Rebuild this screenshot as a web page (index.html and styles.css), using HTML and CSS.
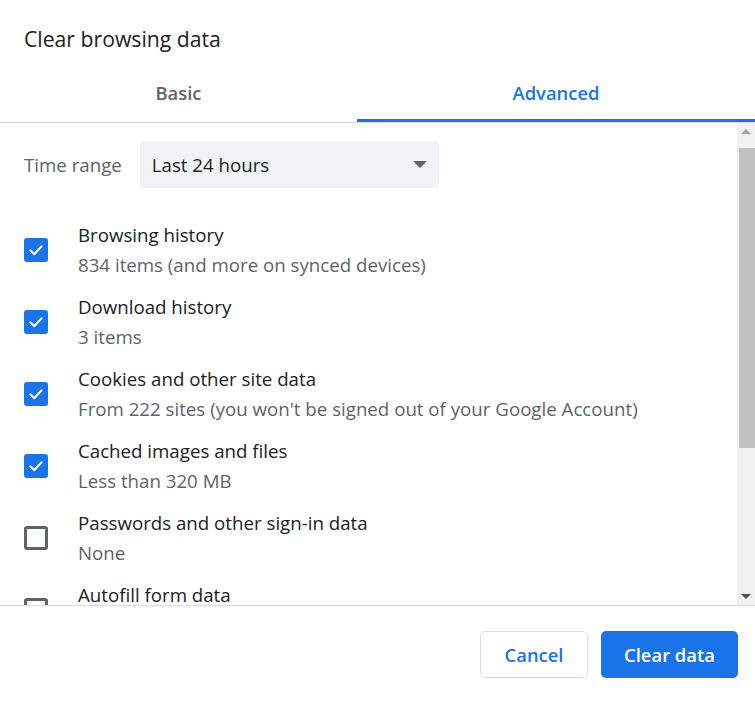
FILE: index.html
```html
<!DOCTYPE html>
<html>
<head>
<meta charset="utf-8">
<link rel="stylesheet" href="styles.css">
</head>
<body>
<div class="dialog">
  <div class="title">Clear browsing data</div>
  <div class="tabs">
    <div class="tab">Basic</div>
    <div class="tab active">Advanced</div>
  </div>
  <div class="scroll">
    <div class="content">
      <div class="range-row">
        <span class="range-label">Time range</span>
        <div class="select">
          <span>Last 24 hours</span>
          <svg class="caret" width="14" height="7" viewBox="0 0 14 7"><path d="M0 0h14L7 7z" fill="#5f6368"/></svg>
        </div>
      </div>
      <div class="item">
        <span class="cb checked"><svg viewBox="0 0 24 24" width="24" height="24"><path d="M6.5 12.5l3.8 3.6 7.2-7.6" fill="none" stroke="#fff" stroke-width="2.2" stroke-linecap="round" stroke-linejoin="round"/></svg></span>
        <div class="texts"><div class="t">Browsing history</div><div class="s">834 items (and more on synced devices)</div></div>
      </div>
      <div class="item">
        <span class="cb checked"><svg viewBox="0 0 24 24" width="24" height="24"><path d="M6.5 12.5l3.8 3.6 7.2-7.6" fill="none" stroke="#fff" stroke-width="2.2" stroke-linecap="round" stroke-linejoin="round"/></svg></span>
        <div class="texts"><div class="t">Download history</div><div class="s">3 items</div></div>
      </div>
      <div class="item">
        <span class="cb checked"><svg viewBox="0 0 24 24" width="24" height="24"><path d="M6.5 12.5l3.8 3.6 7.2-7.6" fill="none" stroke="#fff" stroke-width="2.2" stroke-linecap="round" stroke-linejoin="round"/></svg></span>
        <div class="texts"><div class="t">Cookies and other site data</div><div class="s">From 222 sites (you won't be signed out of your Google Account)</div></div>
      </div>
      <div class="item">
        <span class="cb checked"><svg viewBox="0 0 24 24" width="24" height="24"><path d="M6.5 12.5l3.8 3.6 7.2-7.6" fill="none" stroke="#fff" stroke-width="2.2" stroke-linecap="round" stroke-linejoin="round"/></svg></span>
        <div class="texts"><div class="t">Cached images and files</div><div class="s">Less than 320 MB</div></div>
      </div>
      <div class="item">
        <span class="cb"></span>
        <div class="texts"><div class="t">Passwords and other sign-in data</div><div class="s">None</div></div>
      </div>
      <div class="item">
        <span class="cb"></span>
        <div class="texts"><div class="t last">Autofill form data</div><div class="spacer"></div></div>
      </div>
    </div>
    <div class="scrollbar">
      <div class="arrow up"><svg width="10" height="5" viewBox="0 0 10 5"><path d="M0 5h10L5 0z" fill="#a3a3a3"/></svg></div>
      <div class="track"><div class="thumb"></div></div>
      <div class="arrow down"><svg width="10" height="5" viewBox="0 0 10 5"><path d="M0 0h10L5 5z" fill="#505050"/></svg></div>
    </div>
  </div>
  <div class="footer">
    <button class="btn cancel">Cancel</button>
    <button class="btn primary">Clear data</button>
  </div>
</div>
</body>
</html>
```
FILE: styles.css
```css
* { box-sizing: border-box; }
html, body { margin: 0; padding: 0; background: #fff; }
body { font-family: "Open Sans", "Noto Sans", sans-serif; color: #202124; }
.dialog { width: 755px; height: 703px; display: flex; flex-direction: column; overflow: hidden; }
.title { height: 66px; padding: 25px 0 0 24px; font-size: 21.2px; line-height: 28px; color: #202124; }
.tabs { display: grid; grid-template-columns: 357px 1fr; height: 57px; border-bottom: 1px solid #dadce0; }
.tab { display: flex; align-items: center; justify-content: center; font-size: 18.4px; font-weight: 600; color: #5f6368; border-bottom: 3px solid transparent; }
.tab.active { color: #1a73e8; border-bottom-color: #1a73e8; }
.scroll { height: 483px; display: flex; border-bottom: 1px solid #dadce0; }
.content { flex: 1; overflow: hidden; padding: 18px 0 0 24px; }
.range-row { display: flex; align-items: center; gap: 18px; }
.range-label { font-size: 18.7px; color: #5f6368; }
.select { width: 299px; height: 47px; background: #f1f3f4; border-radius: 4px; display: flex; align-items: center; justify-content: space-between; padding: 0 12px; font-size: 18.7px; color: #202124; }
.item { display: flex; align-items: center; gap: 30px; margin-top: 12px; }
.range-row + .item { margin-top: 32px; }
.cb { width: 24px; height: 24px; border-radius: 3px; border: 3px solid #5f6368; flex: none; display: flex; }
.cb.checked { background: #1a73e8; border: none; }
.texts { display: flex; flex-direction: column; }
.t { font-size: 18.7px; line-height: 30px; color: #202124; }
.t.last { line-height: 20px; margin-top: 5px; }
.spacer { height: 35px; }
.s { font-size: 18.7px; line-height: 30px; color: #5f6368; }
.scrollbar { width: 18px; background: #f1f1f1; display: flex; flex-direction: column; }
.arrow { height: 17px; display: flex; align-items: center; justify-content: center; flex: none; }
.track { flex: 1; padding: 8px 0 0 2px; }
.thumb { height: 300px; background: #c1c1c1; }
.footer { flex: 1; display: flex; justify-content: flex-end; align-items: flex-start; padding: 25px 17px 0 0; gap: 13px; }
.btn { height: 47px; border-radius: 5px; font-family: inherit; font-size: 18.4px; font-weight: 600; cursor: pointer; }
.cancel { width: 108px; background: #fff; color: #1a73e8; border: 1px solid #dadce0; }
.primary { width: 137px; background: #1a73e8; color: #fff; border: none; }
```
